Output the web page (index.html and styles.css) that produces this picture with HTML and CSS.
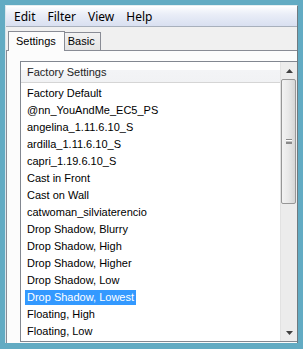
FILE: index.html
```html
<!DOCTYPE html>
<html>
<head>
<meta charset="utf-8">
<link rel="stylesheet" href="styles.css">
</head>
<body>
<div class="window">
  <div class="menubar">
    <span class="menu">Edit</span>
    <span class="menu">Filter</span>
    <span class="menu">View</span>
    <span class="menu">Help</span>
  </div>
  <div class="tabstrip">
    <div class="tab active">Settings</div>
    <div class="tab">Basic</div>
  </div>
  <div class="tabbody">
    <div class="listbox">
      <div class="listmain">
        <div class="header">Factory Settings</div>
        <ul class="items">
          <li><span>Factory Default</span></li>
          <li><span>@nn_YouAndMe_EC5_PS</span></li>
          <li><span>angelina_1.11.6.10_S</span></li>
          <li><span>ardilla_1.11.6.10_S</span></li>
          <li><span>capri_1.19.6.10_S</span></li>
          <li><span>Cast in Front</span></li>
          <li><span>Cast on Wall</span></li>
          <li><span>catwoman_silviaterencio</span></li>
          <li><span>Drop Shadow, Blurry</span></li>
          <li><span>Drop Shadow, High</span></li>
          <li><span>Drop Shadow, Higher</span></li>
          <li><span>Drop Shadow, Low</span></li>
          <li class="selected"><span>Drop Shadow, Lowest</span></li>
          <li><span>Floating, High</span></li>
          <li><span>Floating, Low</span></li>
        </ul>
      </div>
      <div class="scrollbar">
        <div class="sbtn">
          <svg width="7" height="4" viewBox="0 0 7 4"><path d="M0 4 L3.5 0 L7 4 Z" fill="#404040"/></svg>
        </div>
        <div class="thumb"><div class="grip"></div></div>
        <div class="track"></div>
        <div class="sbtn">
          <svg width="7" height="4" viewBox="0 0 7 4"><path d="M0 0 L3.5 4 L7 0 Z" fill="#404040"/></svg>
        </div>
      </div>
    </div>
  </div>
</div>
</body>
</html>
```
FILE: styles.css
```css
html, body {
  margin: 0;
  padding: 0;
}
body {
  width: 303px;
  height: 349px;
  background: #62abc3;
  padding: 5px 5px 6px 5px;
  box-sizing: border-box;
  font-family: "Liberation Sans", Arial, sans-serif;
  font-size: 11px;
  color: #000;
  overflow: hidden;
}
.window {
  height: 338px;
  background: #f0f0f0;
  border-left: 1px solid #d9e6ec;
  border-top: 1px solid #e4eef2;
  border-right: 1px solid #6f7a80;
  display: flex;
  flex-direction: column;
  box-sizing: border-box;
}
.menubar {
  height: 21px;
  box-sizing: border-box;
  flex: none;
  display: flex;
  align-items: center;
  padding-left: 7px;
  background: linear-gradient(#fbfcfe 0%, #e9edf7 40%, #d9e0f1 100%);
  border-top: 1px solid #ffffff;
  border-bottom: 1px solid #a8b0bc;
  font-family: "Noto Sans", "Liberation Sans", sans-serif;
  font-size: 12px;
}
.menu {
  padding: 0 7px 0 1px;
  margin-right: 4px;
}
.tabstrip {
  flex: none;
  display: flex;
  align-items: flex-end;
  padding: 4px 0 0 2px;
  height: 19px;
  position: relative;
  z-index: 1;
}
.tab {
  height: 17px;
  line-height: 17px;
  padding: 0 5px 0 3px;
  border: 1px solid #898c95;
  border-bottom: none;
  background: linear-gradient(#f2f2f2, #e4e4e4);
  font-size: 11px;
  margin-left: -1px;
}
.tab.active {
  height: 19px;
  line-height: 19px;
  background: #fcfcfc;
  padding: 0 8px 0 7px;
  margin-bottom: -1px;
  margin-left: 0;
}
.tabbody {
  flex: 1;
  min-height: 0;
  background: #fcfcfc;
  border-top: 1px solid #898c95;
  border-left: 1px solid #898c95;
  padding: 10px 0 1px 13px;
  display: flex;
}
.listbox {
  flex: 1;
  min-width: 0;
  display: flex;
  border: 1px solid #828790;
  border-right: none;
  background: #fff;
}
.listmain {
  flex: 1;
  min-width: 0;
  overflow: hidden;
}
.header {
  height: 20px;
  line-height: 20px;
  padding-left: 6px;
  background: linear-gradient(#ffffff 0%, #ffffff 40%, #f3f4f6 41%, #f1f2f4 100%);
  border-bottom: 1px solid #d5d5d5;
  font-size: 11px;
  color: #1e1e1e;
}
.items {
  list-style: none;
  margin: 0;
  padding: 2px 0 0 4px;
  white-space: nowrap;
}
.items li {
  height: 17px;
  font-size: 11px;
  color: #000;
}
.items li span {
  display: inline-block;
  height: 15px;
  line-height: 15px;
  padding: 0 2px;
  margin-top: 1px;
}
.items li.selected span {
  background: #3399ff;
  color: #fff;
}
.scrollbar {
  flex: none;
  width: 16px;
  display: flex;
  flex-direction: column;
  background: #ececec;
  border-left: 1px solid #e2e2e2;
}
.sbtn {
  flex: none;
  height: 17px;
  display: flex;
  align-items: center;
  justify-content: center;
}
.thumb {
  flex: none;
  height: 125px;
  margin: 0 1px 0 0;
  border: 1px solid #979797;
  border-radius: 2px;
  background: linear-gradient(90deg, #f3f3f3 0%, #e8e8e8 50%, #d6d6d6 100%);
  display: flex;
  align-items: center;
  justify-content: center;
  box-sizing: border-box;
}
.grip {
  width: 6px;
  height: 5px;
  border-top: 1px solid #8a8a8a;
  border-bottom: 1px solid #8a8a8a;
  background: linear-gradient(#fff 0 1px, #8a8a8a 2px 3px, #fff 3px);
  box-sizing: border-box;
}
.track {
  flex: 1;
}
```
